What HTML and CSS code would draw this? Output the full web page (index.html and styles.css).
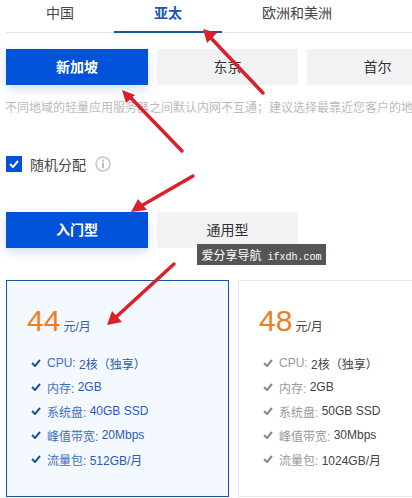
FILE: index.html
```html
<!DOCTYPE html>
<html lang="zh-CN">
<head>
  <meta charset="UTF-8">
  <title>轻量应用服务器</title>
  <link rel="stylesheet" href="styles.css">
</head>
<body>
  <div class="tabs">
    <div class="tab">中国</div>
    <div class="tab active">亚太</div>
    <div class="tab">欧洲和美洲</div>
  </div>

  <div class="options regions">
    <div class="option selected">新加坡</div>
    <div class="option">东京</div>
    <div class="option">首尔</div>
  </div>

  <p class="note">不同地域的轻量应用服务器之间默认内网不互通；建议选择最靠近您客户的地</p>

  <div class="random">
    <span class="checkbox">
      <svg width="10" height="8" viewBox="0 0 10 8"><path d="M1 4l3 3 5-6" fill="none" stroke="#fff" stroke-width="2"/></svg>
    </span>
    <span>随机分配</span>
    <svg class="info" width="16" height="16" viewBox="0 0 16 16">
      <circle cx="8" cy="8" r="7" fill="none" stroke="#c4c4c4" stroke-width="1.5"/>
      <rect x="7.2" y="3.6" width="1.6" height="1.8" fill="#b0b0b0"/>
      <rect x="7.2" y="6.6" width="1.6" height="5.6" fill="#b0b0b0"/>
    </svg>
  </div>

  <div class="options types">
    <div class="option selected">入门型</div>
    <div class="option">通用型</div>
  </div>

  <div class="cards">
    <div class="card current">
      <div class="price"><b>44</b><span>元/月</span></div>
      <ul>
        <li><svg width="10" height="8" viewBox="0 0 10 8"><path d="M1 4l3 3 5-6" fill="none" stroke="currentColor" stroke-width="2"/></svg><span class="label">CPU:</span>&nbsp;2核（独享）</li>
        <li><svg width="10" height="8" viewBox="0 0 10 8"><path d="M1 4l3 3 5-6" fill="none" stroke="currentColor" stroke-width="2"/></svg><span class="label">内存:</span>&nbsp;2GB</li>
        <li><svg width="10" height="8" viewBox="0 0 10 8"><path d="M1 4l3 3 5-6" fill="none" stroke="currentColor" stroke-width="2"/></svg><span class="label">系统盘:</span>&nbsp;40GB SSD</li>
        <li><svg width="10" height="8" viewBox="0 0 10 8"><path d="M1 4l3 3 5-6" fill="none" stroke="currentColor" stroke-width="2"/></svg><span class="label">峰值带宽:</span>&nbsp;20Mbps</li>
        <li><svg width="10" height="8" viewBox="0 0 10 8"><path d="M1 4l3 3 5-6" fill="none" stroke="currentColor" stroke-width="2"/></svg><span class="label">流量包:</span>&nbsp;512GB/月</li>
      </ul>
    </div>
    <div class="card">
      <div class="price"><b>48</b><span>元/月</span></div>
      <ul>
        <li><svg width="10" height="8" viewBox="0 0 10 8"><path d="M1 4l3 3 5-6" fill="none" stroke="currentColor" stroke-width="2"/></svg><span class="label">CPU:</span>&nbsp;2核（独享）</li>
        <li><svg width="10" height="8" viewBox="0 0 10 8"><path d="M1 4l3 3 5-6" fill="none" stroke="currentColor" stroke-width="2"/></svg><span class="label">内存:</span>&nbsp;2GB</li>
        <li><svg width="10" height="8" viewBox="0 0 10 8"><path d="M1 4l3 3 5-6" fill="none" stroke="currentColor" stroke-width="2"/></svg><span class="label">系统盘:</span>&nbsp;50GB SSD</li>
        <li><svg width="10" height="8" viewBox="0 0 10 8"><path d="M1 4l3 3 5-6" fill="none" stroke="currentColor" stroke-width="2"/></svg><span class="label">峰值带宽:</span>&nbsp;30Mbps</li>
        <li><svg width="10" height="8" viewBox="0 0 10 8"><path d="M1 4l3 3 5-6" fill="none" stroke="currentColor" stroke-width="2"/></svg><span class="label">流量包:</span>&nbsp;1024GB/月</li>
      </ul>
    </div>
  </div>

  <!-- annotation arrows drawn over the screenshot -->
  <svg class="arrows" width="412" height="498" viewBox="0 0 412 498">
    <g stroke="#dc2029" stroke-width="3.5" stroke-linecap="round" fill="none">
      <path d="M263 93L210 37"/>
      <path d="M182 151L129 96"/>
      <path d="M193 176L141 206"/>
      <path d="M174 264L115 318"/>
    </g>
    <g fill="#dc2029">
      <path d="M203 29L207 43L217 33Z"/>
      <path d="M122 90L135 95L126 103Z"/>
      <path d="M131 212L138 199L147 210Z"/>
      <path d="M107 325L112 311L122 322Z"/>
    </g>
  </svg>

  <div class="watermark">爱分享导航<span>&nbsp;ifxdh.com</span></div>
</body>
</html>
```

FILE: styles.css
```css
html, body {
  height: 498px;
  overflow: hidden;
}

body {
  position: relative;
  margin: 0;
  padding: 0 0 0 6px;
  width: 406px;
  font-family: "Liberation Sans", "Noto Sans CJK SC", sans-serif;
  font-size: 14px;
  color: #333;
  background-color: #fff;
}

.tabs {
  display: flex;
  height: 32px;
  border-bottom: 1px solid #e5e5e5;
  white-space: nowrap;
}

.tab {
  padding: 0 40px;
  line-height: 27px;
  height: 33px;
  box-sizing: border-box;
  color: #444;
}

.tab.active {
  color: #1a56a8;
  font-weight: bold;
  border-bottom: 2px solid #1a56a8;
}

.options {
  display: flex;
  gap: 9px;
}

.regions {
  margin-top: 16px;
}

.types {
  margin-top: 40px;
}

.option {
  flex: 0 0 141px;
  height: 36px;
  line-height: 36px;
  text-align: center;
  background-color: #f2f2f4;
  color: #333;
}

.option.selected {
  flex-basis: 142px;
  background-color: #0052d9;
  color: #fff;
  font-weight: bold;
  box-shadow: 0 4px 10px rgba(0, 82, 217, 0.18);
}

.note {
  margin: 15px 0 0 -1px;
  font-size: 12px;
  line-height: 16px;
  color: #bbb;
  white-space: nowrap;
}

.random {
  display: flex;
  align-items: center;
  margin-top: 40px;
  height: 16px;
  color: #444;
}

.checkbox {
  display: flex;
  align-items: center;
  justify-content: center;
  width: 16px;
  height: 16px;
  margin-right: 8px;
  background-color: #0052d9;
}

.info {
  margin-left: 9px;
}

.cards {
  display: flex;
  gap: 9px;
  margin-top: 32px;
}

.card {
  flex: 0 0 223px;
  height: 217px;
  box-sizing: border-box;
  padding: 20px 0 0 20px;
  border: 1px solid #e6e6e6;
  color: #444;
}

.card.current {
  border-color: #1a56a8;
  background-color: #f4f8ff;
  color: #2a5cb0;
}

.price {
  height: 40px;
  line-height: 40px;
  font-size: 12px;
}

.price b {
  font-size: 30px;
  font-weight: normal;
  color: #ef7d1d;
}

.price span {
  margin-left: 3px;
}

.card ul {
  list-style: none;
  margin: 10px 0 0;
  padding: 0 0 0 4px;
}

.card li {
  display: flex;
  align-items: center;
  height: 24px;
  font-size: 12px;
  white-space: nowrap;
}

.card li svg {
  margin-right: 6px;
  color: #888;
}

.card.current li svg {
  color: #1a56a8;
}

.label {
  color: #999;
}

.current .label {
  color: #3f6fbd;
}

.arrows {
  position: absolute;
  left: 0;
  top: 0;
  pointer-events: none;
}

.watermark {
  position: absolute;
  left: 197px;
  top: 244px;
  width: 129px;
  height: 21px;
  line-height: 21px;
  text-align: center;
  font-family: "Noto Sans CJK SC", sans-serif;
  font-size: 12px;
  color: #fff;
  background-color: #555;
  white-space: nowrap;
  overflow: hidden;
}

.watermark span {
  font-family: "Liberation Mono", monospace;
  font-size: 10px;
}
```
